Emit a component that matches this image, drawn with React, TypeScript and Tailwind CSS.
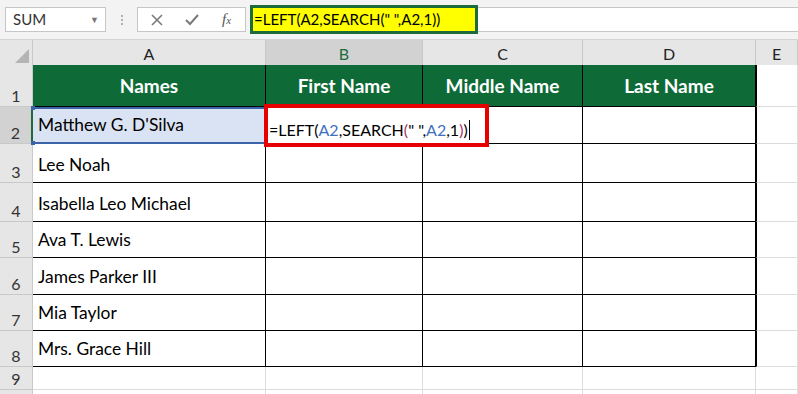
const cols = [
  { key: 'A', w: 233 },
  { key: 'B', w: 157 },
  { key: 'C', w: 160 },
  { key: 'D', w: 173 },
  { key: 'E', w: 42 },
]

const names = [
  'Matthew G. D\'Silva',
  'Lee Noah',
  'Isabella Leo Michael',
  'Ava T. Lewis',
  'James Parker III',
  'Mia Taylor',
  'Mrs. Grace Hill',
]

const rowHeights = [42, 37, 39, 39, 36, 37, 36, 36, 23, 20]

function FormulaBar() {
  return (
    <div className="flex h-[40px] items-center border-b border-[#d4d4d4] bg-[#f3f3f3] pl-[5px]">
      <div className="flex h-[25px] w-[101px] items-center justify-between border border-[#c6c6c6] bg-white pl-[7px] pr-[6px] text-[15px] text-[#333]">
        <span>SUM</span>
        <span className="text-[9px] text-[#777]">▼</span>
      </div>
      <div className="flex w-[31px] flex-col items-center gap-[2px]">
        <span className="h-[2px] w-[2px] bg-[#b0b0b0]" />
        <span className="h-[2px] w-[2px] bg-[#b0b0b0]" />
        <span className="h-[2px] w-[2px] bg-[#b0b0b0]" />
      </div>
      <div className="flex h-[25px] w-[109px] items-center border border-[#c6c6c6] bg-white">
        <svg width="14" height="14" viewBox="0 0 14 14" className="ml-[12px]">
          <path d="M2 2 L12 12 M12 2 L2 12" stroke="#7a7a7a" strokeWidth="1.6" />
        </svg>
        <svg width="16" height="14" viewBox="0 0 16 14" className="ml-[20px]">
          <path d="M2 7 L6 11 L14 2" stroke="#7a7a7a" strokeWidth="2" fill="none" />
        </svg>
        <span className="ml-[22px] font-['Liberation_Serif',serif] text-[15px] italic text-[#555]">
          f<span className="text-[11px]">x</span>
        </span>
      </div>
      <div className="ml-[4px] flex h-[29px] w-[228px] items-center border-[3px] border-[#1d6b3b] bg-[#ffff00] pl-[1px] text-[15px] text-black">
        =LEFT(A2,SEARCH(" ",A2,1))
      </div>
      <div className="h-[25px] flex-1 border-y border-[#c6c6c6] bg-white" />
    </div>
  )
}

function ColumnHeaders() {
  return (
    <div className="flex h-[25px] bg-[#e6e6e6] text-[16px] text-[#222]">
      <div className="relative w-[33px] border-r border-[#c9c9c9]">
        <svg width="14" height="14" viewBox="0 0 14 14" className="absolute bottom-[2px] right-[3px]">
          <path d="M14 0 L14 14 L0 14 Z" fill="#b4b4b4" />
        </svg>
      </div>
      {cols.map((c) => (
        <div
          key={c.key}
          style={{ width: c.w }}
          className={
            'flex shrink-0 items-center justify-center border-r border-[#c9c9c9] pt-[2px] ' +
            (c.key === 'B' ? 'bg-[#d2d2d2] text-[#1d6b3b]' : '')
          }
        >
          {c.key}
        </div>
      ))}
    </div>
  )
}

export default function App() {
  return (
    <div className="relative h-[394px] w-[798px] overflow-hidden bg-white font-['Lato',sans-serif]">
      <FormulaBar />
      <ColumnHeaders />
      <div>
        {rowHeights.map((h, r) => {
          const rowNum = r + 1
          const inTable = rowNum <= 8
          return (
            <div key={r} className="flex" style={{ height: h }}>
              <div
                className={
                  'flex w-[33px] shrink-0 items-end justify-center border-b border-r border-[#c9c9c9] pb-[1px] text-[16px] leading-[18px] text-[#333] ' +
                  (rowNum === 2 ? 'bg-[#d2d2d2] border-r-[#1d6b3b] border-r-2' : 'bg-[#e6e6e6]')
                }
              >
                {rowNum <= 9 ? rowNum : ''}
              </div>
              {cols.map((c, ci) => {
                const tableCell = inTable && ci < 4
                if (rowNum === 1 && tableCell) {
                  return (
                    <div
                      key={c.key}
                      style={{ width: c.w }}
                      className="flex shrink-0 items-center justify-center border-b border-r border-black bg-[#0e6b37] pt-[2px] text-[19px] font-bold text-white"
                    >
                      {['Names', 'First Name', 'Middle Name', 'Last Name'][ci]}
                    </div>
                  )
                }
                if (tableCell) {
                  const isA2 = rowNum === 2 && ci === 0
                  return (
                    <div
                      key={c.key}
                      style={{ width: c.w }}
                      className={
                        'relative flex shrink-0 items-end whitespace-nowrap pb-[4px] pl-[5px] text-[17.4px] text-black ' +
                        (isA2
                          ? 'border-y-2 border-[#3b64a8] bg-[#dae3f3]'
                          : 'border-b border-r border-black')
                      }
                    >
                      {ci === 0 ? names[rowNum - 2] : ''}
                      {isA2 && (
                        <>
                          <span className="absolute -left-[2px] -top-[3px] h-[4px] w-[4px] bg-[#3b64a8]" />
                          <span className="absolute -bottom-[3px] -left-[2px] h-[4px] w-[4px] bg-[#3b64a8]" />
                        </>
                      )}
                    </div>
                  )
                }
                return (
                  <div
                    key={c.key}
                    style={{ width: c.w }}
                    className={
                      'shrink-0 border-b border-r border-[#dcdcdc] ' +
                      (ci === 4 && inTable ? 'border-l border-l-black' : '')
                    }
                  />
                )
              })}
            </div>
          )
        })}
      </div>

      {/* in-cell editor overlay on B2 */}
      <div className="absolute left-[264px] top-[104px] flex h-[43px] w-[225px] items-end border-[4px] border-[#e60000] bg-white pb-[1px] pl-[1px] text-[16px] text-black">
        <span>=LEFT(</span>
        <span className="text-[#3f6fc0]">A2</span>
        <span>,SEARCH</span>
        <span className="text-[#b0306a]">(</span>
        <span>" ",</span>
        <span className="text-[#3f6fc0]">A2</span>
        <span>,1</span>
        <span className="text-[#b0306a]">)</span>
        <span>)</span>
        <span className="mb-[2px] ml-[1px] h-[20px] w-[1px] bg-black" />
      </div>
    </div>
  )
}
